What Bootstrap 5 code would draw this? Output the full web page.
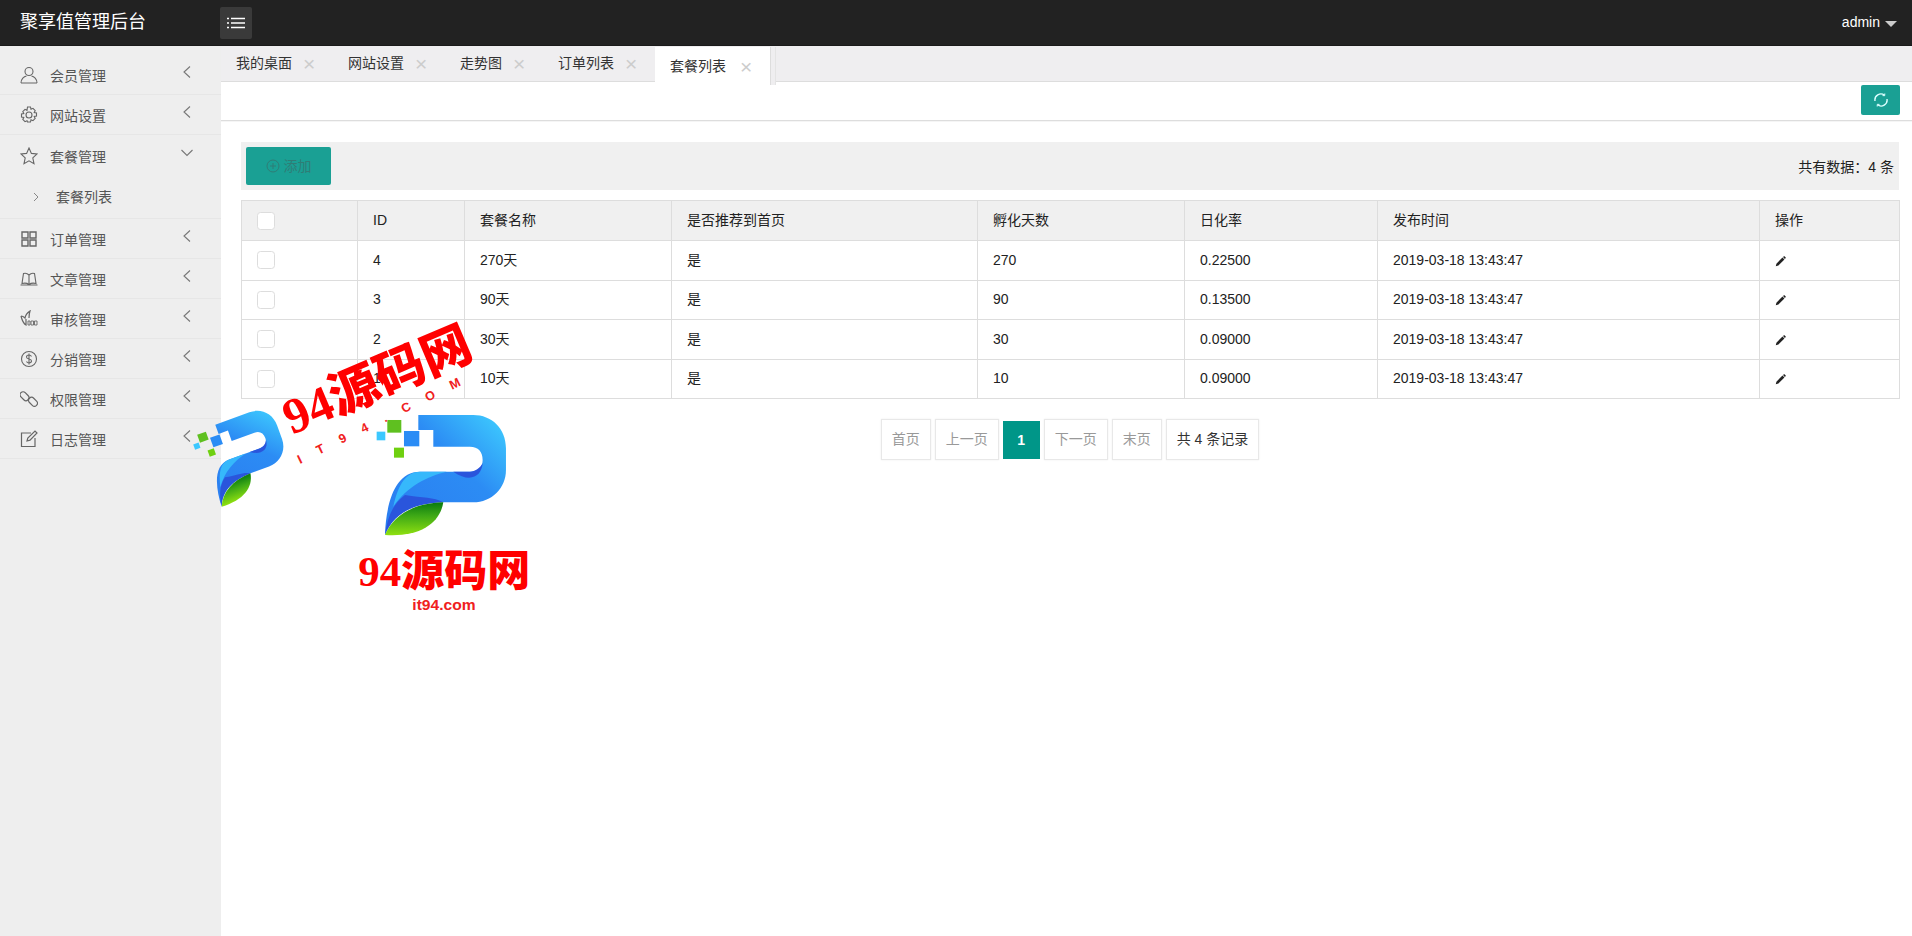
<!DOCTYPE html>
<html lang="zh">
<head>
  <meta charset="utf-8">
  <title>聚享值管理后台</title>
  <link href="https://cdn.jsdelivr.net/npm/bootstrap@5.3.0/dist/css/bootstrap.min.css" rel="stylesheet">
  <style>
    body {
      font-family: "Liberation Sans", "Noto Sans CJK SC", sans-serif;
      font-size: 14px;
      color: #333;
      min-height: 936px;
      overflow: hidden;
    }
    .top-bar { height: 46px; background: #222; color: #fff; padding: 0 15px 0 20px; border-bottom: 1px solid #1a1a1a; }
    .brand { width: 200px; font-size: 18px; }
    .menu-toggle { width: 32px; height: 32px; background: #3a3a3a; border-radius: 2px; }
    .user-menu { font-size: 14px; }
    .user-caret { border-left: 6px solid transparent; border-right: 6px solid transparent; border-top: 6px solid #ccc; margin-left: 5px; margin-top: 2px; }
    .page-body { height: 890px; }
    .side-menu { width: 221px; background: #eee; padding-top: 9px; flex-shrink: 0; }
    .side-row { height: 40px; padding-left: 20px; padding-right: 30px; border-bottom: 1px solid #e6e6e6; color: #555; }
    .side-row svg.ico { width: 18px; height: 18px; margin-right: 12px; flex-shrink: 0; }
    .side-row .side-label { flex-grow: 1; padding-top: 4px; }
    .side-row .arrow { width: 8px; height: 12px; margin-top: -6px; }
    .side-row .arrow-down { width: 12px; height: 8px; margin-top: -6px; margin-right: -2px; }
    .side-sub { height: 43px; padding-left: 33px; }
    .side-sub .side-label { padding-top: 1px; }
    .side-sub .arrow-sub { width: 6px; height: 10px; margin-right: 17px; }
    .side-tall { height: 41px; border-bottom: 0; }
    .main-pane { min-width: 0; }
    .tab-strip { height: 36px; background: #efeef0; border-bottom: 1px solid #ddd; }
    .tab-item { height: 35px; padding-left: 15px; color: #333; white-space: nowrap; flex-shrink: 0; }
    .tab-item span { width: 41px; color: #ccc; font-size: 21px; line-height: 1; padding-left: 11px; }
    .tab-active { background: #fff; height: 38px; margin-top: 1px; width: 115px; box-shadow: 1px 0 0 #ddd, 5px 0 0 #efeef0, 6px 0 0 #e4e4e4; }
    .tab-active span { padding-left: 14px; width: 44px; }
    .tool-strip { height: 39px; border-bottom: 1px solid #ddd; padding: 3px 12px 0 0; box-shadow: 0 1px 0 #f5f5f5; }
    .btn-reload { width: 39px; height: 30px; background: #1aa094; border: 0; border-radius: 2px; padding: 0; }
    .work-area { padding: 21px 13px 0 20px; }
    .action-bar { height: 48px; background: #f0f0f0; padding: 0 5px; margin-bottom: 10px; }
    .btn-add { width: 85px; height: 38px; background: #1aa094; color: #2f7d76; border: 0; border-radius: 2px; font-size: 14px; padding: 0; }
    .btn-add:hover { background: #1aa094; color: #2f7d76; }
    .sum-text { padding-top: 3px; color: #222; }
    .data-table { table-layout: fixed; width: 1658px; margin-bottom: 20px; --bs-table-border-color: #ddd; --bs-table-color: #222; }
    .data-table th, .data-table td { height: 39.5px; padding: 0 15px; vertical-align: middle; font-weight: 400; }
    .data-table th { background: #f0f0f0; height: 40px; }
    .c1 { width: 116px; } .c2 { width: 107px; } .c3 { width: 207px; } .c4 { width: 306px; }
    .c5 { width: 207px; } .c6 { width: 193px; } .c7 { width: 382px; } .c8 { width: 140px; }
    .row-check { width: 18px; height: 18px; border-radius: 0; border-color: #ddd; margin: 0; display: block; }
    .pager-box { gap: 4px; }
    .pager-box .page-item .page-link { margin-left: 0; height: 41px; line-height: 39px; padding: 0 10px; border: 1px solid #e8e8e8; color: #999; border-radius: 0; font-size: 14px; box-shadow: 0 0 2px #eee; }
    .pager-box .page-item.active .page-link { background: #009688; border-color: #009688; color: #fff; font-weight: 700; width: 37px; height: 38px; line-height: 36px; margin-top: 2px; padding: 0; text-align: center; box-shadow: none; }
    .pager-box .page-item .pager-total { color: #333; }
    .stamp-layer { position: absolute; left: 0; top: 0; width: 1912px; height: 936px; pointer-events: none; }
    .stamp-big { font-family: "Liberation Serif", "Noto Sans CJK SC", serif; font-weight: 900; fill: #f00; }
    .stamp-small { font-family: "Liberation Sans", sans-serif; font-weight: 700; fill: #f02020; }
  </style>
</head>
<body>

  <!-- Header -->
  <header class="top-bar d-flex align-items-center">
    <div class="brand">聚享值管理后台</div>
    <div class="menu-toggle d-flex align-items-center justify-content-center">
      <svg width="18" height="12" viewBox="0 0 18 12" fill="none" stroke="#fff" stroke-width="1.6">
        <path d="M0 1.500h2M4 1.500h14M0 6h2M4 6h14M0 10.500h2M4 10.500h14"/>
      </svg>
    </div>
    <div class="user-menu ms-auto d-flex align-items-center">admin<span class="user-caret"></span></div>
  </header>

  <div class="page-body d-flex">
    <!-- Sidebar -->
    <aside class="side-menu">
      <div class="side-row d-flex align-items-center">
        <svg class="ico" viewBox="0 0 18 18" fill="none" stroke="#666" stroke-width="1.1"><circle cx="9" cy="5.500" r="4"/><path d="M1 17c0-4 3-6.500 5.500-7M17 17c0-4-3-6.500-5.500-7M1 17h16"/></svg>
        <span class="side-label">会员管理</span>
        <svg class="arrow" viewBox="0 0 8 12" fill="none" stroke="#777" stroke-width="1.1"><path d="M7 .5 1 6l6 5.500"/></svg>
      </div>
      <div class="side-row d-flex align-items-center">
        <svg class="ico" viewBox="0 0 18 18" fill="none" stroke="#666" stroke-width="1.1"><circle cx="9" cy="9" r="3"/><path d="M7.500 1h3l.5 2.300 2-1 2.200 2.200-1 2 2.300.5v3l-2.300.5 1 2-2.200 2.200-2-1-.5 2.300h-3L7 14.700l-2 1-2.200-2.200 1-2L1.500 11V8l2.300-.5-1-2L5 3.300l2 1z"/></svg>
        <span class="side-label">网站设置</span>
        <svg class="arrow" viewBox="0 0 8 12" fill="none" stroke="#777" stroke-width="1.1"><path d="M7 .5 1 6l6 5.500"/></svg>
      </div>
      <div class="side-row side-tall d-flex align-items-center">
        <svg class="ico" viewBox="0 0 18 18" fill="none" stroke="#666" stroke-width="1.1"><path d="m9 1 2.400 5.400 5.600.6-4.200 3.900 1.200 5.800L9 13.800l-5 2.900 1.200-5.800L1 7l5.600-.6z"/></svg>
        <span class="side-label">套餐管理</span>
        <svg class="arrow-down" viewBox="0 0 12 8" fill="none" stroke="#777" stroke-width="1.1"><path d="m.5 1 5.500 5.500L11.500 1"/></svg>
      </div>
      <div class="side-row side-sub d-flex align-items-center">
        <svg class="arrow-sub" viewBox="0 0 6 10" fill="none" stroke="#888" stroke-width="1"><path d="m1 1 4 4-4 4"/></svg>
        <span class="side-label">套餐列表</span>
      </div>
      <div class="side-row d-flex align-items-center">
        <svg class="ico" viewBox="0 0 18 18" fill="none" stroke="#666" stroke-width="1.4"><path d="M2 2h6v6H2zM10 2h6v6h-6zM2 10h6v6H2zM10 10h6v6h-6z"/></svg>
        <span class="side-label">订单管理</span>
        <svg class="arrow" viewBox="0 0 8 12" fill="none" stroke="#777" stroke-width="1.1"><path d="M7 .5 1 6l6 5.500"/></svg>
      </div>
      <div class="side-row d-flex align-items-center">
        <svg class="ico" viewBox="0 0 18 18" fill="none" stroke="#666" stroke-width="1.1"><path d="M9 5C7 3 5 3 3.500 3.500L2 13.500c2-.5 5-.5 7 1 2-1.500 5-1.500 7-1L14.500 3.500C13 3 11 3 9 5zM9 5v9.500M.5 15h17"/></svg>
        <span class="side-label">文章管理</span>
        <svg class="arrow" viewBox="0 0 8 12" fill="none" stroke="#777" stroke-width="1.1"><path d="M7 .5 1 6l6 5.500"/></svg>
      </div>
      <div class="side-row d-flex align-items-center">
        <svg class="ico" viewBox="0 0 18 18" fill="none" stroke="#666" stroke-width="1.2"><path d="M1 6c2 0 3 1 4 2 .5-3 2-5 5-7-1 3-1 5-1 7M1 6c1 4 3 8 5 9V9"/><path d="M8 15v-4h2v4zM11 15v-4h2.500v4zM14.500 15v-4H17v4z" stroke-width=".9"/></svg>
        <span class="side-label">审核管理</span>
        <svg class="arrow" viewBox="0 0 8 12" fill="none" stroke="#777" stroke-width="1.1"><path d="M7 .5 1 6l6 5.500"/></svg>
      </div>
      <div class="side-row d-flex align-items-center">
        <svg class="ico" viewBox="0 0 18 18" fill="none" stroke="#666" stroke-width="1.1"><circle cx="9" cy="9" r="7.500"/><path d="M11.500 6.500C11 5.500 10 5 9 5c-1.500 0-2.500.8-2.500 2S7.500 8.700 9 9s2.500 1 2.500 2.100S10.500 13 9 13c-1 0-2-.5-2.500-1.500M9 3.500v11"/></svg>
        <span class="side-label">分销管理</span>
        <svg class="arrow" viewBox="0 0 8 12" fill="none" stroke="#777" stroke-width="1.1"><path d="M7 .5 1 6l6 5.500"/></svg>
      </div>
      <div class="side-row d-flex align-items-center">
        <svg class="ico" viewBox="0 0 18 18" fill="none" stroke="#666" stroke-width="1.2"><rect x="-.5" y="3.200" width="10" height="6" rx="3" transform="rotate(45 4.500 6.200)"/><rect x="8" y="8.800" width="10" height="6" rx="3" transform="rotate(45 13 11.800)"/></svg>
        <span class="side-label">权限管理</span>
        <svg class="arrow" viewBox="0 0 8 12" fill="none" stroke="#777" stroke-width="1.1"><path d="M7 .5 1 6l6 5.500"/></svg>
      </div>
      <div class="side-row d-flex align-items-center">
        <svg class="ico" viewBox="0 0 18 18" fill="none" stroke="#666" stroke-width="1.2"><path d="M11 3H1.500v13.500H15V8"/><path d="m7 11 .8-3L15 1l2 2-7 7.200z"/></svg>
        <span class="side-label">日志管理</span>
        <svg class="arrow" viewBox="0 0 8 12" fill="none" stroke="#777" stroke-width="1.1"><path d="M7 .5 1 6l6 5.500"/></svg>
      </div>
    </aside>

    <main class="main-pane flex-grow-1">
      <!-- Tabs -->
      <div class="tab-strip d-flex">
        <div class="tab-item d-flex align-items-center">我的桌面<span>×</span></div>
        <div class="tab-item d-flex align-items-center">网站设置<span>×</span></div>
        <div class="tab-item d-flex align-items-center">走势图<span>×</span></div>
        <div class="tab-item d-flex align-items-center">订单列表<span>×</span></div>
        <div class="tab-item tab-active d-flex align-items-center">套餐列表<span>×</span></div>
      </div>

      <div class="tool-strip d-flex justify-content-end">
        <button class="btn btn-reload d-flex align-items-center justify-content-center" type="button">
          <svg width="16" height="16" viewBox="0 0 16 16" fill="none" stroke="#dff" stroke-width="1.4"><path d="M2 9a6 6 0 0 1 9.500-5.800M14 7a6 6 0 0 1-9.500 5.800"/><path d="m11.800 1.500-.1 2.200-2.200-.1M4.200 14.500l.1-2.200 2.200.1" stroke-width="1"/></svg>
        </button>
      </div>

      <div class="work-area">
        <div class="action-bar d-flex align-items-center justify-content-between">
          <button class="btn btn-add d-flex align-items-center justify-content-center gap-1" type="button">
            <svg width="14" height="14" viewBox="0 0 14 14" fill="none" stroke="#2f7d76" stroke-width="1"><circle cx="7" cy="7" r="6"/><path d="M7 4v6M4 7h6"/></svg>
            添加
          </button>
          <div class="sum-text">共有数据：4 条</div>
        </div>

        <table class="table table-bordered data-table">
          <thead>
            <tr>
              <th class="c1"><input class="form-check-input row-check" type="checkbox"></th>
              <th class="c2">ID</th>
              <th class="c3">套餐名称</th>
              <th class="c4">是否推荐到首页</th>
              <th class="c5">孵化天数</th>
              <th class="c6">日化率</th>
              <th class="c7">发布时间</th>
              <th class="c8">操作</th>
            </tr>
          </thead>
          <tbody>
            <tr>
              <td><input class="form-check-input row-check" type="checkbox"></td>
              <td>4</td><td>270天</td><td>是</td><td>270</td><td>0.22500</td><td>2019-03-18 13:43:47</td>
              <td><svg width="11" height="11" viewBox="0 0 14 14" fill="#222"><path d="M1 13l.8-3.200L9.500 2l2.500 2.500L4.300 12.200zM10.200 1.300l.8-.8c.4-.4 1-.4 1.400 0l1 1c.4.400.4 1 0 1.400l-.8.800z"/></svg></td>
            </tr>
            <tr>
              <td><input class="form-check-input row-check" type="checkbox"></td>
              <td>3</td><td>90天</td><td>是</td><td>90</td><td>0.13500</td><td>2019-03-18 13:43:47</td>
              <td><svg width="11" height="11" viewBox="0 0 14 14" fill="#222"><path d="M1 13l.8-3.200L9.500 2l2.500 2.500L4.300 12.200zM10.200 1.300l.8-.8c.4-.4 1-.4 1.400 0l1 1c.4.400.4 1 0 1.400l-.8.800z"/></svg></td>
            </tr>
            <tr>
              <td><input class="form-check-input row-check" type="checkbox"></td>
              <td>2</td><td>30天</td><td>是</td><td>30</td><td>0.09000</td><td>2019-03-18 13:43:47</td>
              <td><svg width="11" height="11" viewBox="0 0 14 14" fill="#222"><path d="M1 13l.8-3.200L9.500 2l2.500 2.500L4.300 12.200zM10.200 1.300l.8-.8c.4-.4 1-.4 1.400 0l1 1c.4.400.4 1 0 1.400l-.8.800z"/></svg></td>
            </tr>
            <tr>
              <td><input class="form-check-input row-check" type="checkbox"></td>
              <td>1</td><td>10天</td><td>是</td><td>10</td><td>0.09000</td><td>2019-03-18 13:43:47</td>
              <td><svg width="11" height="11" viewBox="0 0 14 14" fill="#222"><path d="M1 13l.8-3.200L9.500 2l2.500 2.500L4.300 12.200zM10.200 1.300l.8-.8c.4-.4 1-.4 1.400 0l1 1c.4.400.4 1 0 1.400l-.8.800z"/></svg></td>
            </tr>
          </tbody>
        </table>

        <ul class="pagination pager-box justify-content-center">
          <li class="page-item"><a class="page-link" href="#">首页</a></li>
          <li class="page-item"><a class="page-link" href="#">上一页</a></li>
          <li class="page-item active"><a class="page-link" href="#">1</a></li>
          <li class="page-item"><a class="page-link" href="#">下一页</a></li>
          <li class="page-item"><a class="page-link" href="#">末页</a></li>
          <li class="page-item"><a class="page-link pager-total" href="#">共 4 条记录</a></li>
        </ul>
      </div>
    </main>
  </div>

  <!-- Watermark over the page -->
  <svg class="stamp-layer" viewBox="0 0 1912 936">
    <defs>
      <linearGradient id="pBody" x1="0" y1="1" x2="1" y2="0">
        <stop offset="0" stop-color="#2a7cf0"/><stop offset=".6" stop-color="#2c8cf4"/><stop offset="1" stop-color="#3fd0ff"/>
      </linearGradient>
      <linearGradient id="pLeaf" x1="0" y1="0" x2="0" y2="1">
        <stop offset="0" stop-color="#0a7a10"/><stop offset=".4" stop-color="#3da816"/><stop offset="1" stop-color="#8fe010"/>
      </linearGradient>
      <g id="pLogo">
        <path fill="url(#pBody)" d="M715 345H880C935 345 978 385 978 445V510C978 565 935 607 880 607H790C700 607 640 640 615 705C618 620 640 515 720 515H870C895 515 908 500 908 480C908 455 895 440 870 440H760V390H715Z"/>
        <path fill="#36b8fb" d="M640 620C655 550 680 515 720 515H800C740 530 680 560 640 620Z"/>
        <path fill="#2a55dc" d="M615 705C622 650 640 610 675 585C730 595 760 590 790 607C700 610 640 640 615 705Z"/>
        <path fill="#2a55dc" d="M820 515H870C885 515 900 505 908 490C905 530 870 550 820 515Z"/>
        <path fill="url(#pLeaf)" d="M615 705C640 645 700 610 790 607C780 670 720 712 615 705Z"/>
        <rect x="622" y="360" width="42" height="38" fill="#5fc020"/>
        <rect x="672" y="393" width="46" height="46" fill="#2a8cf5"/>
        <rect x="590" y="395" width="26" height="26" fill="#3cc8ff"/>
        <rect x="642" y="443" width="30" height="30" fill="#6fd010"/>
      </g>
    </defs>
    <g transform="translate(180 300) scale(.3333)">
      <use href="#pLogo"/>
      <use href="#pLogo" transform="translate(125 620) rotate(-20) scale(.66) translate(-615 -705)"/>
      <text class="stamp-big" font-size="150" transform="translate(335 405) rotate(-23)">94源码网</text>
      <text class="stamp-small" font-size="38" letter-spacing="52" transform="translate(360 492) rotate(-26)">IT94.COM</text>
      <text class="stamp-big" font-size="129" x="535" y="858">94源码网</text>
      <text class="stamp-small" font-size="42" x="697" y="930" textLength="190" lengthAdjust="spacingAndGlyphs">it94.com</text>
    </g>
  </svg>

  <script src="https://cdn.jsdelivr.net/npm/bootstrap@5.3.0/dist/js/bootstrap.bundle.min.js"></script>
</body>
</html>
